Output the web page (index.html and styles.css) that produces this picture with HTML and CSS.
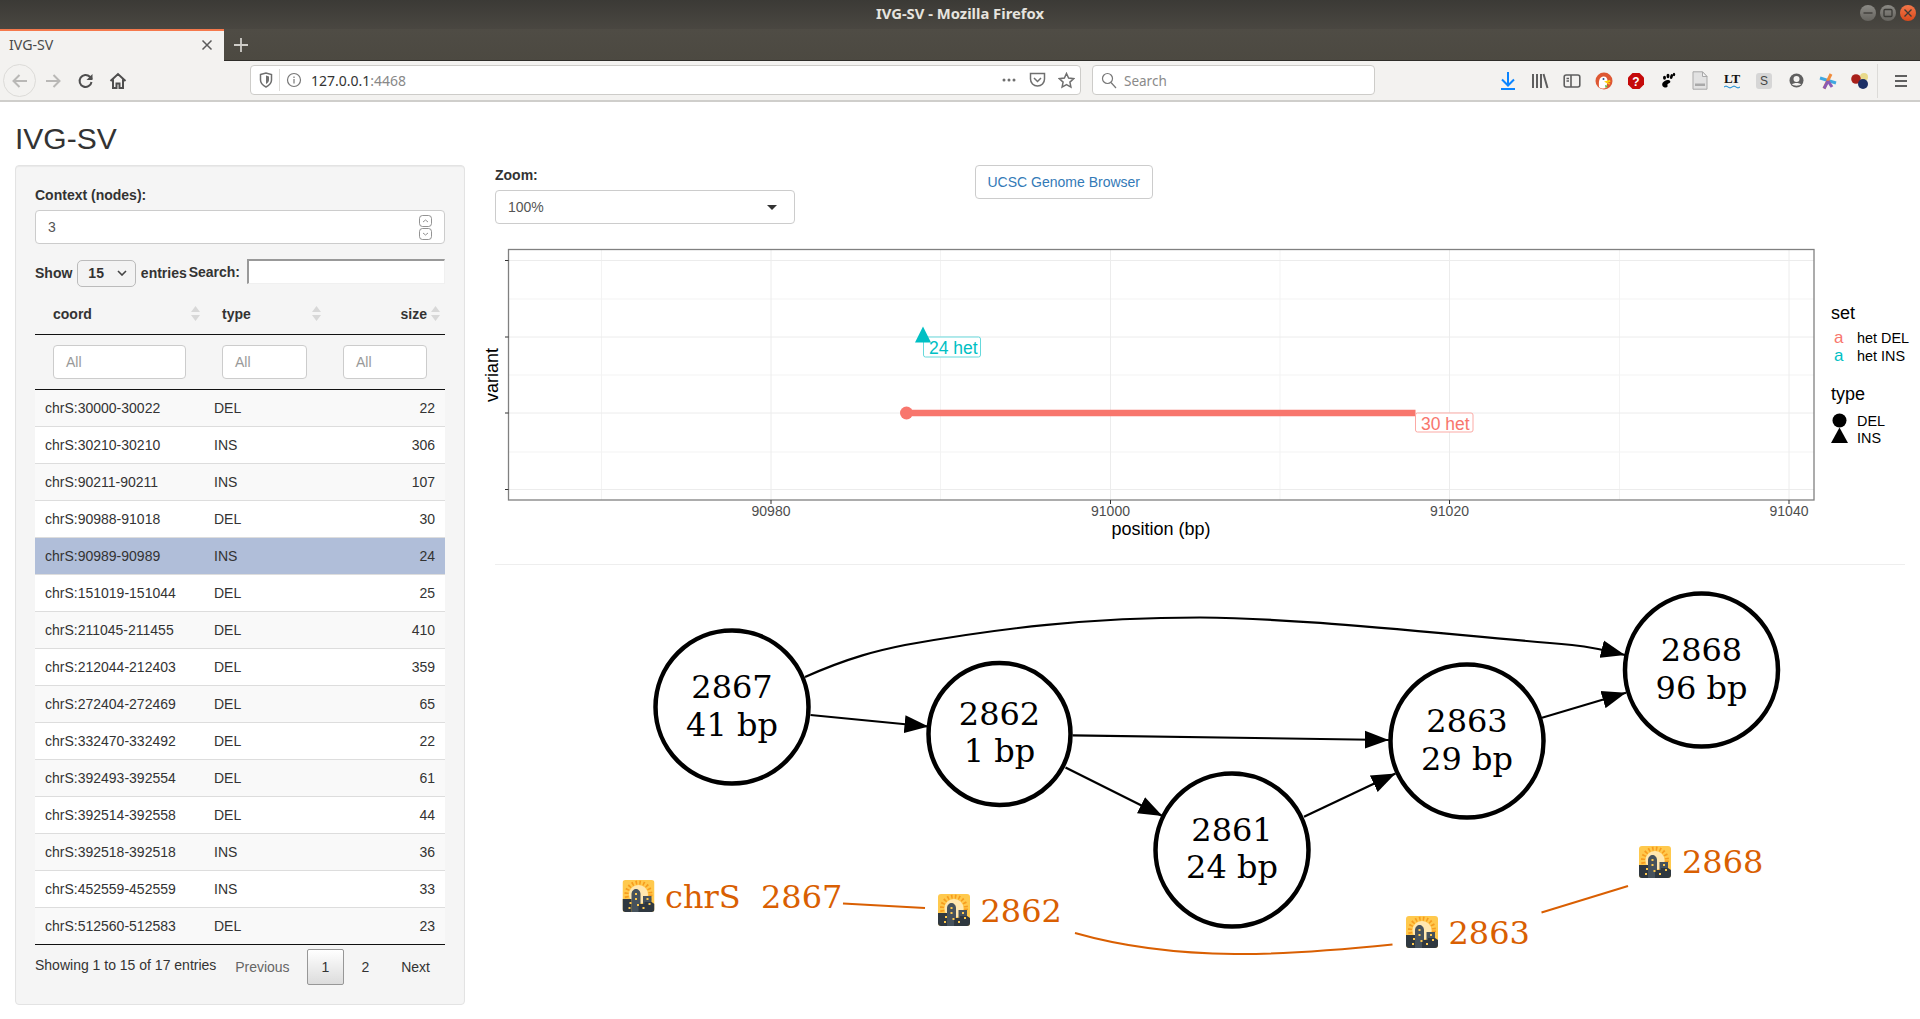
FILE: index.html
```html
<!DOCTYPE html>
<html lang="en">
<head>
    <meta charset="UTF-8">
    <title>IVG-SV</title>
    <link rel="stylesheet" href="styles.css">
</head>
<body>
    <!-- browser window -->
    <div class="titlebar">
        <span class="window-title">IVG-SV - Mozilla Firefox</span>
        <div class="window-buttons">
            <span class="win-btn"><svg width="16" height="16" viewBox="0 0 16 16"><path d="M3.5 8h9" class="win-glyph"/></svg></span>
            <span class="win-btn"><svg width="16" height="16" viewBox="0 0 16 16"><rect x="4" y="4.5" width="8" height="7" rx="1" class="win-glyph"/></svg></span>
            <span class="win-btn win-close"><svg width="16" height="16" viewBox="0 0 16 16"><path d="M4.5 4.5l7 7M11.5 4.5l-7 7" class="win-glyph"/></svg></span>
        </div>
    </div>
    <div class="tabstrip">
        <div class="tab">
            <span class="tab-title">IVG-SV</span>
            <svg width="12" height="12" viewBox="0 0 12 12"><path d="M1.5 1.5l9 9M10.5 1.5l-9 9" class="tab-x"/></svg>
        </div>
        <svg class="new-tab" width="16" height="16" viewBox="0 0 16 16"><path d="M8 1v14M1 8h14" class="new-tab-plus"/></svg>
    </div>
    <div class="toolbar">
        <div class="nav-buttons">
            <span class="back-btn"><svg width="18" height="18" viewBox="0 0 18 18"><path d="M16 9H2.5M8.5 3L2.5 9l6 6" class="ico-disabled"/></svg></span>
            <span class="nav-btn"><svg width="18" height="18" viewBox="0 0 18 18"><path d="M2 9h13.5M9.5 3l6 6-6 6" class="ico-disabled"/></svg></span>
            <span class="nav-btn"><svg width="18" height="18" viewBox="0 0 18 18"><path d="M14.5 10a6 6 0 1 1-1.6-5.2L15 7" class="ico-dark"/><path d="M15.5 2v6h-6z" class="ico-fill"/></svg></span>
            <span class="nav-btn"><svg width="18" height="18" viewBox="0 0 18 18"><path d="M1.5 9L9 2l7.5 7M4 7.5V16h3.5v-4.5h3V16H14V7.5" class="ico-dark"/></svg></span>
        </div>
        <div class="urlbar">
            <svg width="14" height="16" viewBox="0 0 14 16"><path d="M1.5 2.5L7 1l5.5 1.5V8c0 3-2.5 5.5-5.5 7-3-1.5-5.500-4-5.500-7z" class="ico-mid"/><path d="M7 3.5l3 1V8c0 1.500-1.200 3-3 4z" class="ico-fill-mid"/></svg>
            <span class="url-sep"></span>
            <svg width="16" height="16" viewBox="0 0 16 16"><circle cx="8" cy="8" r="6.5" class="ico-thin"/><path d="M8 7v4.5M8 4.5V6" class="ico-thin"/></svg>
            <span class="url-text">127.0.0.1<span class="url-port">:4468</span></span>
            <span class="url-actions">
                <svg width="16" height="6" viewBox="0 0 16 6"><circle cx="3" cy="3" r="1.5" class="ico-fill-mid"/><circle cx="8" cy="3" r="1.5" class="ico-fill-mid"/><circle cx="13" cy="3" r="1.5" class="ico-fill-mid"/></svg>
                <svg width="17" height="16" viewBox="0 0 17 16"><path d="M1.5 1.5h14V7c0 4-3 7-7 7s-7-3-7-7z" class="ico-mid"/><path d="M5 6l3.5 3.5L12 6" class="ico-mid"/></svg>
                <svg width="17" height="17" viewBox="0 0 17 17"><path d="M8.5 1.5l2.100 4.600 5 .6-3.700 3.400 1 5-4.400-2.500-4.400 2.500 1-5L1.400 6.700l5-.6z" class="ico-mid"/></svg>
            </span>
        </div>
        <div class="searchbar">
            <svg width="16" height="17" viewBox="0 0 16 17"><circle cx="6.5" cy="6.5" r="5" class="ico-thin"/><path d="M10 10.5l5 5.500" class="ico-thin"/></svg>
            <span class="search-hint">Search</span>
        </div>
        <div class="addons">
            <span class="addon"><svg width="18" height="20" viewBox="0 0 18 20"><path d="M9 1v13M3 8.5L9 14.5l6-6" class="ico-blue"/><path d="M2 18h14" class="ico-blue"/></svg></span>
            <span class="addon"><svg width="18" height="18" viewBox="0 0 18 18"><path d="M2 2v14M6 2v14M10 2v14M12.5 2l4 14" class="ico-lib"/></svg></span>
            <span class="addon"><svg width="18" height="16" viewBox="0 0 18 16"><rect x="1.2" y="2" width="15.6" height="12" rx="2" class="ico-side"/><path d="M8 2v12M3.5 5.5H6M3.5 8H6" class="ico-side"/></svg></span>
            <span class="addon"><svg width="18" height="18" viewBox="0 0 18 18"><circle cx="9" cy="9" r="8.5" fill="#de5833"/><path d="M4 15c-.5-5 0-10 4-10.500 3-.3 4 1.500 4.500 3.500l-1 7.500c-2 1.500-5 1.500-7.500-.5z" fill="#fff"/><path d="M9 9.500l6-1.500.5 1.800-3 .9 2.500.5-.5 1.600z" fill="#fdd20a"/><path d="M10 13l3 1-2.500 2z" fill="#65bc46"/><circle cx="8.5" cy="7" r="1" fill="#2d4f8e"/></svg></span>
            <span class="addon"><svg width="18" height="18" viewBox="0 0 18 18"><path d="M5.5 1h7L17 5.5v7L12.5 17h-7L1 12.5v-7z" fill="#c50a0a"/><text x="9" y="13.5" class="stop-mark">?</text></svg></span>
            <span class="addon"><svg width="16" height="17" viewBox="0 0 16 17"><path d="M6 15.5c-3 0-4.500-2-3.500-4.500 1-2 4-3.500 6-3 2 .5 2.500 2 1 3-1.500.8-2.500 1-2 2.500.3 1-.3 2-1.500 2z" fill="#000"/><ellipse cx="4.5" cy="5.8" rx="1.5" ry="2"/><ellipse cx="8" cy="4" rx="1.5" ry="2.2"/><ellipse cx="11.5" cy="4.5" rx="1.4" ry="2.6" transform="rotate(15 11.5 4.5)"/><ellipse cx="14" cy="2.5" rx="1.2" ry="1.8"/></svg></span>
            <span class="addon"><svg width="16" height="19" viewBox="0 0 16 19"><path d="M1 .8h9.500L15 5.500v12.700H1z" fill="#e2e2e2" stroke="#a9a9a9"/><path d="M10.500.8v4.700H15z" fill="#f5f5f5" stroke="#a9a9a9"/><rect x="3" y="12.5" width="10" height="2.5" fill="#a9a9a9"/></svg></span>
            <span class="addon lt-icon"><span class="lt-mark">LT</span><svg width="16" height="4" viewBox="0 0 16 4"><path d="M0 2q2-2 4 0t4 0 4 0 4 0" class="ico-wave"/></svg></span>
            <span class="addon"><span class="s-mark">S</span></span>
            <span class="addon"><svg width="15" height="15" viewBox="0 0 15 15"><circle cx="7.5" cy="7.5" r="7" fill="#5f5f5f"/><circle cx="7.5" cy="6" r="3" fill="#f3f2f0"/><path d="M3 11.5c1.500-2 7.500-2 9 0-1.500 1.500-7.500 1.500-9 0z" fill="#f3f2f0"/></svg></span>
            <span class="addon"><svg width="18" height="18" viewBox="0 0 18 18"><path d="M1 6l16 5" class="star-blue"/><path d="M5 16.5L12 2" class="star-orange"/><path d="M5 16.5L9 9" class="star-purple"/><path d="M9 9l4 6" class="star-purple"/></svg></span>
            <span class="addon"><svg width="18" height="18" viewBox="0 0 18 18"><circle cx="13" cy="5" r="4" fill="#e8d98a"/><circle cx="5" cy="7" r="4.8" fill="#a8201a"/><circle cx="12" cy="12" r="5" fill="#1c2f66"/></svg></span>
            <span class="toolbar-sep"></span>
            <span class="menu-btn"><svg width="14" height="14" viewBox="0 0 14 14"><path d="M1 2h12M1 7h12M1 12h12" class="ico-menu"/></svg></span>
        </div>
    </div>

    <!-- app -->
    <div class="page">
        <h2 class="app-title">IVG-SV</h2>
        <div class="layout">
            <div class="sidebar">
                <label class="field-label">Context (nodes):</label>
                <div class="number-input">
                    <span>3</span>
                    <span class="spinner">
                        <svg width="13" height="12" viewBox="0 0 13 12"><rect x=".5" y=".5" width="12" height="11" rx="3" class="spin-box"/><path d="M4 7l2.500-2L9 7" class="spin-box"/></svg>
                        <svg width="13" height="12" viewBox="0 0 13 12"><rect x=".5" y=".5" width="12" height="11" rx="3" class="spin-box"/><path d="M4 5l2.500 2L9 5" class="spin-box"/></svg>
                    </span>
                </div>
                <div class="dt-controls">
                    <div class="dt-length">
                        <span>Show</span>
                        <span class="length-select">15<svg width="10" height="6" viewBox="0 0 10 6"><path d="M1 1l4 4 4-4" class="chev"/></svg></span>
                        <span>entries</span>
                    </div>
                    <div class="dt-search">
                        <span>Search:</span>
                        <span class="search-input"></span>
                    </div>
                </div>
                <table class="dt-table">
                    <colgroup><col class="col-coord"><col class="col-type"><col class="col-size"></colgroup>
                    <thead>
                        <tr class="head-row">
                            <th><span class="th-inner">coord<svg class="sort" width="9" height="15" viewBox="0 0 9 15"><path d="M4.5 0L9 6H0zM4.5 15L0 9h9z"/></svg></span></th>
                            <th><span class="th-inner">type<svg class="sort" width="9" height="15" viewBox="0 0 9 15"><path d="M4.5 0L9 6H0zM4.5 15L0 9h9z"/></svg></span></th>
                            <th><span class="th-inner th-right">size<svg class="sort sort-right" width="9" height="15" viewBox="0 0 9 15"><path d="M4.5 0L9 6H0zM4.5 15L0 9h9z"/></svg></span></th>
                        </tr>
                        <tr class="filter-row">
                            <td><span class="filter-input">All</span></td>
                            <td><span class="filter-input">All</span></td>
                            <td><span class="filter-input">All</span></td>
                        </tr>
                    </thead>
                    <tbody>
                        <tr><td>chrS:30000-30022</td><td>DEL</td><td class="num">22</td></tr>
                        <tr><td>chrS:30210-30210</td><td>INS</td><td class="num">306</td></tr>
                        <tr><td>chrS:90211-90211</td><td>INS</td><td class="num">107</td></tr>
                        <tr><td>chrS:90988-91018</td><td>DEL</td><td class="num">30</td></tr>
                        <tr class="selected"><td>chrS:90989-90989</td><td>INS</td><td class="num">24</td></tr>
                        <tr><td>chrS:151019-151044</td><td>DEL</td><td class="num">25</td></tr>
                        <tr><td>chrS:211045-211455</td><td>DEL</td><td class="num">410</td></tr>
                        <tr><td>chrS:212044-212403</td><td>DEL</td><td class="num">359</td></tr>
                        <tr><td>chrS:272404-272469</td><td>DEL</td><td class="num">65</td></tr>
                        <tr><td>chrS:332470-332492</td><td>DEL</td><td class="num">22</td></tr>
                        <tr><td>chrS:392493-392554</td><td>DEL</td><td class="num">61</td></tr>
                        <tr><td>chrS:392514-392558</td><td>DEL</td><td class="num">44</td></tr>
                        <tr><td>chrS:392518-392518</td><td>INS</td><td class="num">36</td></tr>
                        <tr><td>chrS:452559-452559</td><td>INS</td><td class="num">33</td></tr>
                        <tr><td>chrS:512560-512583</td><td>DEL</td><td class="num">23</td></tr>
                    </tbody>
                </table>
                <div class="dt-footer">
                    <span class="dt-info">Showing 1 to 15 of 17 entries</span>
                    <div class="pager">
                        <span class="page-link page-disabled">Previous</span>
                        <span class="page-link page-current">1</span>
                        <span class="page-link">2</span>
                        <span class="page-link">Next</span>
                    </div>
                </div>
            </div>

            <div class="main">
                <div class="top-row">
                    <div class="zoom-group">
                        <label class="field-label">Zoom:</label>
                        <div class="zoom-select">100%<span class="caret"></span></div>
                    </div>
                    <a class="ucsc-btn">UCSC Genome Browser</a>
                </div>

                <!-- viewBox uses page coordinates -->
                <svg class="plot" width="1410" height="310" viewBox="495 240 1410 310">
                    <g class="grid-minor">
                        <path d="M509 299H1814M509 375H1814M509 452H1814M601.5 250V500M940.5 250V500M1280 250V500M1619.5 250V500"/>
                    </g>
                    <g class="grid-major">
                        <path d="M509 260.5H1814M509 337H1814M509 413H1814M509 489.5H1814M771 250V500M1110.5 250V500M1449.5 250V500M1789 250V500"/>
                    </g>
                    <rect x="508.5" y="249.5" width="1305.5" height="250.5" class="plot-frame"/>
                    <path d="M505 260.5h3.5M505 337h3.5M505 413h3.5M505 489.5h3.5M771 500v4M1110.5 500v4M1449.5 500v4M1789 500v4" class="tick"/>

                    <path d="M906.5 413H1415.5" class="del-bar"/>
                    <circle cx="906.5" cy="413" r="6.5" class="del-mark"/>

                    <rect x="923.5" y="337" width="57" height="20" rx="2" class="ins-box"/>
                    <path d="M923 326.5l8 16h-16z" class="ins-mark"/>
                    <text x="929" y="354" class="repel ins-text">24 het</text>
                    <rect x="1415.5" y="413" width="57.5" height="19" rx="2" class="del-box"/>
                    <text x="1421" y="430" class="repel del-text">30 het</text>

                    <text x="771" y="516" class="tick-label">90980</text>
                    <text x="1110.5" y="516" class="tick-label">91000</text>
                    <text x="1449.5" y="516" class="tick-label">91020</text>
                    <text x="1789" y="516" class="tick-label">91040</text>
                    <text x="1161" y="534.5" class="axis-title axis-x">position (bp)</text>
                    <text transform="translate(497.5 375) rotate(-90)" class="axis-title axis-x">variant</text>

                    <text x="1831" y="318.5" class="axis-title">set</text>
                    <text x="1834" y="343" class="legend-a del-text">a</text>
                    <text x="1857" y="342.5" class="legend-text">het DEL</text>
                    <text x="1834" y="361" class="legend-a ins-text">a</text>
                    <text x="1857" y="361" class="legend-text">het INS</text>
                    <text x="1831" y="399.5" class="axis-title">type</text>
                    <circle cx="1839.5" cy="420.5" r="7"/>
                    <text x="1857" y="426" class="legend-text">DEL</text>
                    <path d="M1839.5 427.5l8.5 15.5h-17z"/>
                    <text x="1857" y="443" class="legend-text">INS</text>
                </svg>

                <hr class="divider">

                <svg class="graph" width="1410" height="420" viewBox="495 565 1410 420">
                    <defs>
                        <marker id="arrow" markerUnits="userSpaceOnUse" markerWidth="25" markerHeight="19" refX="24" refY="9.5" orient="auto">
                            <path d="M0 .5L24 9.5L0 18.5z"/>
                        </marker>
                        <symbol id="city" viewBox="0 0 32 32">
                            <rect width="32" height="32" rx="3" fill="#ffc94d"/>
                            <circle cx="16" cy="14.5" r="12" fill="none" stroke="#f79c1e" stroke-width="4" stroke-dasharray="1.6 2.2"/>
                            <circle cx="16" cy="14.5" r="9.5" fill="#ffe7b0"/>
                            <path d="M9 32V14c0-3 2.5-5 4.5-5s4.5 2 4.5 5v18z" fill="#46525c"/>
                            <path d="M20.5 32V16H29v16z" fill="#46525c"/>
                            <path d="M0 19h9v13H3c-2 0-3-1-3-3zM16 24h6v-2h7l3 2v5c0 2-1 3-3 3H16z" fill="#2f3840"/>
                            <path d="M12.5 13h2v2h-2zM12.5 18h2v2h-2zM14.5 24h2v2h-2zM6 27h2v2H6zM7 22h2v2H7zM24 18h2v2h-2zM26 23h2v2h-2zM20 27h2v2h-2z" fill="#ffc94d"/>
                        </symbol>
                    </defs>

                    <path d="M805 677C850 657 880 650 905 645C1000 628 1090 617.5 1200 617.5C1300 618.5 1400 630 1572 645C1590 647 1605 650 1625 655" class="edge"/>
                    <path d="M810.5 715L928.5 726.5" class="edge"/>
                    <path d="M1072.5 735.3L1388.8 740" class="edge"/>
                    <path d="M1065.5 767.5L1162.5 816" class="edge"/>
                    <path d="M1304 816.7L1395.5 773.5" class="edge"/>
                    <path d="M1542 717.7L1626 692.7" class="edge"/>

                    <circle cx="732" cy="707" r="76.5" class="node"/>
                    <text x="732" y="697.5" class="node-text">2867</text>
                    <text x="732" y="735.5" class="node-text">41 bp</text>
                    <circle cx="999.5" cy="734" r="71" class="node"/>
                    <text x="999.5" y="724.5" class="node-text">2862</text>
                    <text x="999.5" y="762" class="node-text">1 bp</text>
                    <circle cx="1232" cy="850" r="76.5" class="node"/>
                    <text x="1232" y="840.5" class="node-text">2861</text>
                    <text x="1232" y="878" class="node-text">24 bp</text>
                    <circle cx="1467" cy="741" r="76.5" class="node"/>
                    <text x="1467" y="731.5" class="node-text">2863</text>
                    <text x="1467" y="769.5" class="node-text">29 bp</text>
                    <circle cx="1701.5" cy="670" r="76.5" class="node"/>
                    <text x="1701.5" y="660.5" class="node-text">2868</text>
                    <text x="1701.5" y="698.5" class="node-text">96 bp</text>

                    <use href="#city" x="622.5" y="880" width="32" height="32"/>
                    <text x="665" y="908" class="path-text">chrS</text>
                    <text x="761" y="908" class="path-text">2867</text>
                    <path d="M843 903.5L925 908" class="path-link"/>
                    <use href="#city" x="938" y="894" width="32" height="32"/>
                    <text x="980.5" y="922" class="path-text">2862</text>
                    <path d="M1075 933C1180 963 1290 955 1392.5 944.5" class="path-link"/>
                    <use href="#city" x="1406" y="916" width="32" height="32"/>
                    <text x="1448.5" y="944" class="path-text">2863</text>
                    <path d="M1541.5 912.5L1628 886" class="path-link"/>
                    <use href="#city" x="1639" y="846" width="32" height="32"/>
                    <text x="1682" y="873" class="path-text">2868</text>
                </svg>
            </div>
        </div>
    </div>
</body>
</html>
```

FILE: styles.css
```css
* {
    box-sizing: border-box;
}
body {
    margin: 0;
    height: 1019px;
    overflow: hidden;
    background: #fff;
    color: #333;
    font-family: "Liberation Sans", Arial, sans-serif;
    font-size: 14px;
    line-height: 20px;
}

/* browser window */
.titlebar {
    display: flex;
    justify-content: center;
    align-items: center;
    position: relative;
    height: 29px;
    padding-bottom: 4px;
    background: linear-gradient(#3b3a36, #4a4741);
}
.window-title {
    color: #e6e4df;
    font-family: "Noto Sans", sans-serif;
    font-size: 14.8px;
    font-weight: 700;
}
.window-buttons {
    position: absolute;
    right: 4px;
    top: 5px;
    display: flex;
    gap: 4px;
}
.win-btn {
    display: flex;
    align-items: center;
    justify-content: center;
    width: 16px;
    height: 16px;
    border-radius: 50%;
    background: linear-gradient(#8b8a85, #65635e);
}
.win-close {
    background: linear-gradient(#f3774a, #d9491b);
}
.win-glyph {
    fill: none;
    stroke: #3b3a36;
    stroke-width: 1.3;
}
.tabstrip {
    display: flex;
    align-items: center;
    height: 32px;
    background: linear-gradient(#4f4c45, #4c4941);
    border-bottom: 1px solid #2e2d29;
}
.tab {
    display: flex;
    align-items: center;
    justify-content: space-between;
    width: 224px;
    height: 32px;
    padding: 0 11px 2px 9px;
    background: #f3f2f0;
    border-top: 2px solid #f5794c;
}
.tab-title {
    color: #4a4a4a;
    font-family: "Noto Sans", sans-serif;
    font-size: 14.2px;
}
.tab-x {
    fill: none;
    stroke: #5b5b5b;
    stroke-width: 1.5;
}
.new-tab {
    margin-left: 9px;
}
.new-tab-plus {
    fill: none;
    stroke: #cfcdc8;
    stroke-width: 1.8;
}
.toolbar {
    display: flex;
    align-items: center;
    height: 41px;
    background: #f3f2f0;
    border-bottom: 2px solid #cfcecb;
}
.nav-buttons {
    display: flex;
    align-items: center;
    width: 250px;
    padding-left: 3px;
}
.back-btn {
    display: flex;
    align-items: center;
    justify-content: center;
    width: 33px;
    height: 33px;
    margin-right: 1px;
    border: 1px solid #dcdbd8;
    border-radius: 50%;
}
.nav-btn {
    display: flex;
    align-items: center;
    justify-content: center;
    width: 32px;
}
.nav-btn + .nav-btn {
    margin-left: .5px;
}
.ico-disabled, .ico-dark, .ico-mid, .ico-thin, .ico-blue, .ico-lib, .ico-side, .ico-menu, .ico-wave {
    fill: none;
}
.ico-disabled {
    stroke: #b9b8b6;
    stroke-width: 2;
}
.ico-dark {
    stroke: #4e4e4e;
    stroke-width: 2;
}
.ico-fill {
    fill: #4e4e4e;
}
.ico-mid {
    stroke: #6f6f6f;
    stroke-width: 1.5;
}
.ico-fill-mid {
    fill: #6f6f6f;
}
.ico-thin {
    stroke: #777;
    stroke-width: 1.2;
}
.ico-blue {
    stroke: #0a84ff;
    stroke-width: 2;
}
.ico-lib {
    stroke: #5f5f5f;
    stroke-width: 2;
}
.ico-side {
    stroke: #5f5f5f;
    stroke-width: 1.6;
}
.ico-menu {
    stroke: #5f5f5f;
    stroke-width: 2;
}
.ico-wave {
    stroke: #0a84d0;
    stroke-width: 1;
}
.urlbar, .searchbar {
    display: flex;
    align-items: center;
    height: 30px;
    margin-bottom: 1px;
    background: #fff;
    border: 1px solid #cdccc9;
    border-radius: 4px;
}
.urlbar {
    width: 831px;
    padding: 0 5px 0 8px;
}
.url-sep {
    width: 1px;
    height: 22px;
    margin: 0 6px;
    background: #dcdbd8;
}
.url-text {
    margin: 2px 0 0 9px;
    color: #333;
    font-family: "Noto Sans", sans-serif;
    font-size: 14px;
}
.url-port {
    color: #888;
}
.url-actions {
    display: flex;
    align-items: center;
    gap: 12px;
    margin-left: auto;
}
.searchbar {
    width: 283px;
    margin-left: 11px;
    padding-left: 8px;
    gap: 7px;
}
.search-hint {
    margin-top: 2px;
    color: #8a8a8a;
    font-family: "Noto Sans", sans-serif;
    font-size: 13.5px;
}
.addons {
    display: flex;
    align-items: center;
    margin-left: auto;
}
.addon {
    display: flex;
    flex-direction: column;
    align-items: center;
    justify-content: center;
    width: 32px;
    height: 32px;
}
.stop-mark {
    fill: #fff;
    font-size: 12px;
    font-weight: 700;
    text-anchor: middle;
}
.lt-mark {
    color: #111;
    font-family: "Liberation Serif", serif;
    font-size: 13px;
    font-weight: 700;
    line-height: 12px;
}
.s-mark {
    width: 16px;
    height: 16px;
    border-radius: 3px;
    background: #d6d6d6;
    color: #444;
    font-size: 12px;
    line-height: 16px;
    text-align: center;
}
.star-blue, .star-orange, .star-purple {
    fill: none;
    stroke-width: 3;
}
.star-blue {
    stroke: #3fa7e0;
}
.star-orange {
    stroke: #f08c3c;
}
.star-purple {
    stroke: #8a5bb5;
}
.toolbar-sep {
    width: 1px;
    height: 34px;
    margin: 0 4px 0 1px;
    background: #dcdbd8;
}
.menu-btn {
    display: flex;
    justify-content: center;
    width: 38px;
}

/* app */
.page {
    padding: 0 15px;
}
.app-title {
    margin: 20px 0 10px;
    color: #333;
    font-size: 30px;
    font-weight: 500;
    line-height: 33px;
}
.layout {
    display: flex;
    gap: 30px;
}
.sidebar {
    width: 450px;
    height: 840px;
    padding: 19px;
    background: #f5f5f5;
    border: 1px solid #e3e3e3;
    border-radius: 4px;
    box-shadow: inset 0 1px 1px rgba(0, 0, 0, .05);
}
.field-label {
    display: block;
    margin-bottom: 5px;
    font-weight: 700;
}
.number-input {
    display: flex;
    align-items: center;
    justify-content: space-between;
    height: 34px;
    padding: 0 12px;
    background: #fff;
    border: 1px solid #ccc;
    border-radius: 4px;
    color: #555;
}
.spinner {
    display: flex;
    flex-direction: column;
    gap: 1px;
}
.spinner svg {
    display: block;
}
.spin-box {
    fill: none;
    stroke: #777;
    stroke-width: .8;
}
.dt-controls {
    display: flex;
    justify-content: space-between;
    height: 31px;
    margin-top: 15px;
    font-weight: 700;
}
.dt-length {
    display: flex;
    align-items: center;
    height: 28px;
}
.length-select {
    display: flex;
    align-items: center;
    justify-content: space-between;
    width: 59px;
    height: 27px;
    margin: 0 4.5px 0 5px;
    padding: 0 8px 0 10px;
    background: #f3f3f3;
    border: 1px solid #bbb;
    border-radius: 5px;
}
.chev {
    fill: none;
    stroke: #444;
    stroke-width: 1.6;
}
.dt-search {
    display: flex;
    align-items: center;
    gap: 7px;
    height: 25px;
}
.search-input {
    width: 198px;
    height: 25px;
    background: #fff;
    border-style: solid;
    border-width: 2px 1px 1px 2px;
    border-color: #999 #f0f0f0 #f0f0f0 #999;
}
.dt-table {
    width: 410px;
    border-collapse: collapse;
    table-layout: fixed;
}
.col-coord {
    width: 169px;
}
.col-type {
    width: 121px;
}
.col-size {
    width: 120px;
}
.head-row th {
    height: 44px;
    padding: 0 18px 10px;
    border-bottom: 1px solid #111;
    text-align: left;
    vertical-align: bottom;
}
.th-inner {
    display: flex;
    align-items: center;
    position: relative;
}
.th-right {
    justify-content: flex-end;
}
.sort {
    position: absolute;
    right: -14px;
    fill: #d8d8d8;
}
.sort-right {
    right: -13px;
}
.filter-row td {
    height: 55px;
    padding: 0 18px;
    border-bottom: 1px solid #111;
}
.filter-input {
    display: block;
    height: 34px;
    padding: 6px 12px;
    background: #fff;
    border: 1px solid #ccc;
    border-radius: 4px;
    color: #999;
}
.dt-table tbody td {
    height: 37px;
    padding: 0 10px;
    background: #fff;
    border-top: 1px solid #ddd;
}
.dt-table tbody tr:nth-child(odd) td {
    background: #f9f9f9;
}
.dt-table tbody tr:first-child td {
    border-top: none;
}
.dt-table tbody tr:last-child td {
    border-bottom: 1px solid #111;
}
.dt-table tbody tr.selected td {
    background: #b0bed9;
}
.dt-table tbody .num {
    text-align: right;
}
.dt-footer {
    display: flex;
    justify-content: space-between;
}
.dt-info {
    margin-top: 10px;
}
.pager {
    display: flex;
    gap: 2px;
    margin-top: 4px;
}
.page-link {
    height: 36px;
    padding: 7px 14px;
    border: 1px solid transparent;
    border-radius: 2px;
}
.page-disabled {
    color: #666;
}
.page-current {
    background: linear-gradient(#fff, #dcdcdc);
    border-color: #979797;
}
.main {
    width: 1410px;
}
.top-row {
    display: flex;
    height: 75px;
}
.zoom-group {
    width: 300px;
}
.zoom-select {
    display: flex;
    align-items: center;
    justify-content: space-between;
    height: 34px;
    padding: 0 17px 0 12px;
    background: #fff;
    border: 1px solid #ccc;
    border-radius: 4px;
    color: #555;
}
.caret {
    border-style: solid;
    border-width: 5px 5px 0;
    border-color: #333 transparent transparent;
}
.ucsc-btn {
    align-self: flex-start;
    height: 34px;
    margin-left: 180px;
    padding: 6px 11.5px;
    background: #fff;
    border: 1px solid #ccc;
    border-radius: 4px;
    color: #337ab7;
}
.plot, .graph {
    display: block;
    overflow: visible;
}
.divider {
    height: 1px;
    margin: 14px 0 0;
    background: #eee;
    border: 0;
}

/* plot */
.grid-minor path {
    fill: none;
    stroke: #f3f3f3;
}
.grid-major path {
    fill: none;
    stroke: #ececec;
}
.plot-frame {
    fill: none;
    stroke: #808080;
    stroke-width: 1.3;
}
.tick {
    fill: none;
    stroke: #333;
}
.del-bar {
    fill: none;
    stroke: #f8766d;
    stroke-width: 6.5;
}
.del-mark {
    fill: #f8766d;
}
.ins-mark {
    fill: #00bfc4;
}
.ins-box, .del-box {
    fill: #fff;
    stroke-width: 1;
}
.ins-box {
    stroke: #66d9dc;
}
.del-box {
    stroke: #fbaaa5;
}
.repel {
    font-size: 17.5px;
}
.ins-text {
    fill: #00bfc4;
}
.del-text {
    fill: #f8766d;
}
.tick-label {
    fill: #4d4d4d;
    font-size: 14px;
    text-anchor: middle;
}
.axis-title {
    fill: #000;
    font-size: 18px;
}
.axis-x {
    text-anchor: middle;
}
.legend-text {
    fill: #000;
    font-size: 14.4px;
}
.legend-a {
    font-size: 17px;
}

/* graph */
.edge {
    fill: none;
    stroke: #000;
    stroke-width: 2.2;
    marker-end: url(#arrow);
}
.node {
    fill: #fff;
    stroke: #000;
    stroke-width: 4.5;
}
.node-text {
    fill: #000;
    font-family: "DejaVu Serif", serif;
    font-size: 32px;
    text-anchor: middle;
}
.path-text {
    fill: #d95f02;
    font-family: "DejaVu Serif", serif;
    font-size: 32px;
}
.path-link {
    fill: none;
    stroke: #d95f02;
    stroke-width: 2;
}
```
